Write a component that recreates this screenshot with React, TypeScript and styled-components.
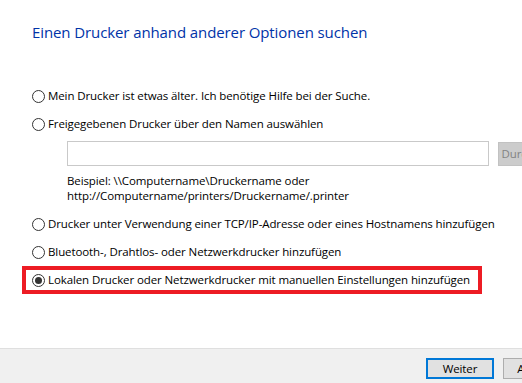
import React from 'react'
import styled, {createGlobalStyle} from 'styled-components'

const GlobalStyle = createGlobalStyle`
  html, body {
    margin: 0;
    padding: 0;
    background: #ffffff;
  }
  body {
    font-family: "Open Sans", "Noto Sans", sans-serif;
    font-size: 11.5px;
    letter-spacing: -0.1px;
    color: #000000;
  }
`

const Dialog = styled.div`
  width: 522px;
  height: 383px;
  display: flex;
  flex-direction: column;
  overflow: hidden;
  background: #ffffff;
`

const Content = styled.main`
  flex: 1;
  padding: 21px 0 0 22px;
`

const Title = styled.h1`
  margin: 0 0 0 10px;
  font-size: 15px;
  letter-spacing: -0.1px;
  line-height: 22px;
  font-weight: 400;
  color: #0033a8;
  white-space: nowrap;
`

const OptionList = styled.div`
  margin-top: 39px;
  display: flex;
  flex-direction: column;
  align-items: flex-start;
`

const Option = styled.label<{$marked?: boolean}>`
  display: flex;
  align-items: center;
  gap: 3px;
  height: 28px;
  box-sizing: border-box;
  padding: 0 8px 0 6px;
  border: 4px solid ${p => (p.$marked ? '#ed1c24' : 'transparent')};
  line-height: 20px;
  white-space: nowrap;
`

const Radio = styled.span<{$checked?: boolean}>`
  position: relative;
  width: 13px;
  height: 13px;
  box-sizing: border-box;
  border: 1px solid #333333;
  border-radius: 50%;
  background: #ffffff;
  flex-shrink: 0;

  &::after {
    content: '';
    display: ${p => (p.$checked ? 'block' : 'none')};
    position: absolute;
    left: 2px;
    top: 2px;
    width: 7px;
    height: 7px;
    border-radius: 50%;
    background: #333333;
  }
`

const NameBlock = styled.div`
  padding-left: 45px;
  margin-bottom: 7px;
`

const InputRow = styled.div`
  display: flex;
  gap: 9px;
  margin-top: 3px;
  width: 520px;
`

const NameInput = styled.div`
  width: 424px;
  height: 25px;
  box-sizing: border-box;
  border: 1px solid #c9c9c9;
  background: #ffffff;
`

const BrowseButton = styled.div`
  width: 90px;
  height: 24px;
  box-sizing: border-box;
  margin-top: 1px;
  padding-left: 3px;
  border: 1px solid #c2c2c2;
  background: #cccccc;
  color: #838383;
  line-height: 22px;
  white-space: nowrap;
`

const Example = styled.p`
  margin: 7px 0 0;
  line-height: 15px;
  white-space: nowrap;
`

const Footer = styled.footer`
  height: 35px;
  box-sizing: border-box;
  border-top: 1px solid #dfdfdf;
  background: #f0f0f0;
  display: flex;
  gap: 9px;
  padding: 9px 0 0 426px;
`

const Button = styled.div<{$primary?: boolean}>`
  flex-shrink: 0;
  width: ${p => (p.$primary ? '68px' : '86px')};
  height: 21px;
  box-sizing: border-box;
  border: ${p => (p.$primary ? '2px solid #0078d7' : '1px solid #adadad')};
  background: #e1e1e1;
  text-align: center;
  line-height: ${p => (p.$primary ? '17px' : '19px')};
  white-space: nowrap;
`

const options = [
  'Mein Drucker ist etwas älter. Ich benötige Hilfe bei der Suche.',
  'Freigegebenen Drucker über den Namen auswählen',
  'Drucker unter Verwendung einer TCP/IP-Adresse oder eines Hostnamens hinzufügen',
  'Bluetooth-, Drahtlos- oder Netzwerkdrucker hinzufügen',
  'Lokalen Drucker oder Netzwerkdrucker mit manuellen Einstellungen hinzufügen',
]

export default function App() {
  const selected = 4
  return (
    <Dialog>
      <GlobalStyle/>
      <Content>
        <Title>Einen Drucker anhand anderer Optionen suchen</Title>
        <OptionList>
          {options.map((text, i) => (
            <React.Fragment key={text}>
              <Option $marked={i === selected}>
                <Radio $checked={i === selected}/>
                {text}
              </Option>
              {i === 1 && (
                <NameBlock>
                  <InputRow>
                    <NameInput/>
                    <BrowseButton>Durchsuchen...</BrowseButton>
                  </InputRow>
                  <Example>
                    Beispiel: \\Computername\Druckername oder<br/>
                    http://Computername/printers/Druckername/.printer
                  </Example>
                </NameBlock>
              )}
            </React.Fragment>
          ))}
        </OptionList>
      </Content>
      <Footer>
        <Button $primary>Weiter</Button>
        <Button>Abbrechen</Button>
      </Footer>
    </Dialog>
  )
}
